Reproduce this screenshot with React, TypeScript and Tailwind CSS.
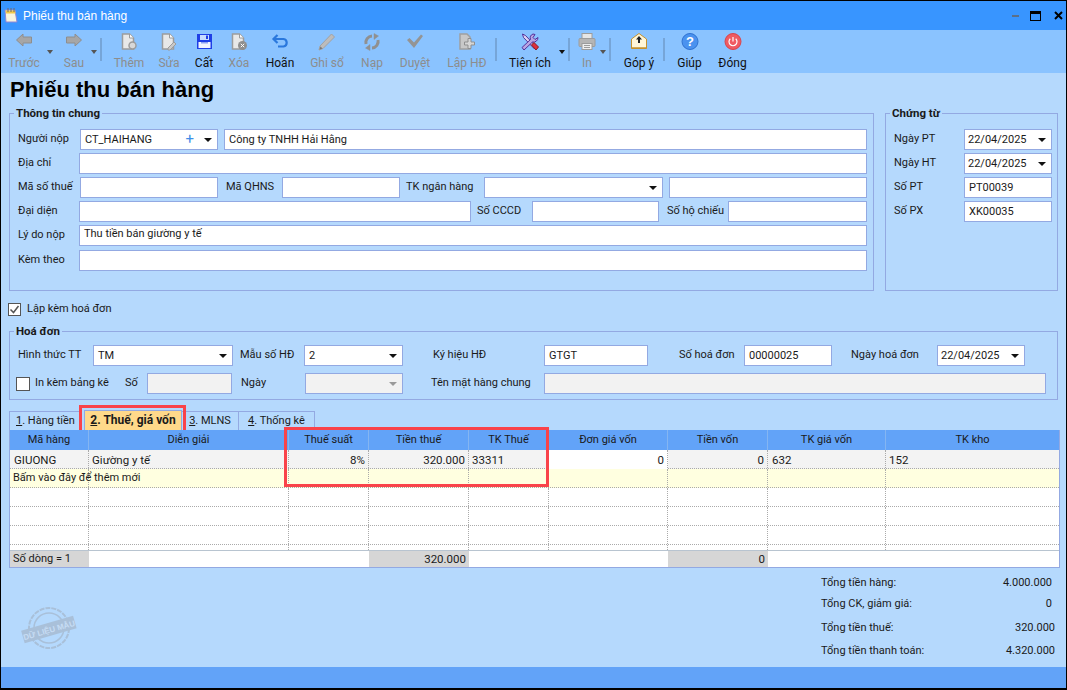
import type { ReactNode } from "react";

const fieldBorder = "border border-[#93a9e2]";
const gray = "#9c9c9c";

function ArrowLeft() {
  return (
    <svg width="18" height="16" viewBox="0 0 18 16">
      <path d="M1.500 7 8 1v3h8.500v6H8v3z" fill="#a6a6a6" stroke="#8e8e8e" />
    </svg>
  );
}

function ArrowRight() {
  return (
    <svg width="18" height="16" viewBox="0 0 18 16">
      <path d="M16.500 7 10 1v3H1.500v6H10v3z" fill="#a6a6a6" stroke="#8e8e8e" />
    </svg>
  );
}

function Doc({ children }: { children?: ReactNode }) {
  return (
    <svg width="18" height="18" viewBox="0 0 18 18">
      <path d="M2.500 1h7l4 4v11h-11z" fill="#e8e8e8" stroke={gray} strokeWidth="1.500" />
      <path d="M9.500 1v4h4" fill="#fff" stroke={gray} />
      {children}
    </svg>
  );
}

function Save() {
  return (
    <svg width="18" height="18" viewBox="0 0 18 18">
      <rect x="2" y="1" width="15" height="15" fill="#1f3fe6" />
      <rect x="5" y="2" width="9" height="5" fill="#c8dcff" />
      <rect x="3.500" y="9" width="12" height="6" fill="#f2f4ff" />
      <rect x="6" y="9" width="7" height="1.500" fill="#8fa3f2" />
      <rect x="11" y="2.500" width="2" height="3.500" fill="#1f3fe6" />
    </svg>
  );
}

function Undo() {
  return (
    <svg width="18" height="18" viewBox="0 0 18 18" fill="none" stroke="#2a78dd" strokeWidth="2.200">
      <path d="M6.500 2 2.500 6 6.500 10" />
      <path d="M3 6h9.500a3.800 3.800 0 0 1 0 7.500H7" />
    </svg>
  );
}

function Pencil() {
  return (
    <svg width="18" height="18" viewBox="0 0 18 18">
      <path d="M13.500 1 16.500 4 5 15.500 1 17 2 13z" fill="#bcbcbc" stroke="#a2a2a2" />
      <path d="M1.500 16.500 2.500 13.500 4.500 15.500z" fill="#777" />
    </svg>
  );
}

function Reload() {
  return (
    <svg width="18" height="18" viewBox="0 0 18 18" fill="none" stroke="#909090" strokeWidth="3">
      <path d="M3 11a6.500 6.500 0 0 1 6-8" />
      <path d="M15 7a6.500 6.500 0 0 1-6 8" />
      <path d="M11 0.500v6l4.500-3.500zM7 17.500v-6l-4.500 3.500z" fill="#909090" strokeWidth="0.500" />
    </svg>
  );
}

function Check() {
  return (
    <svg width="18" height="18" viewBox="0 0 18 18">
      <path d="M1 7 3.500 5 8 9.500 15 1.500 17 3 8 15z" fill="#949494" />
    </svg>
  );
}

function Invoice() {
  return (
    <svg width="18" height="18" viewBox="0 0 18 18">
      <path d="M2 1h7l3 3v12H2z" fill="#c8c8c8" stroke="#a0a0a0" strokeWidth="1.500" />
      <path d="M10 5.500h3v3.500h3.500v3H13v3.500h-3V12H6.500V9H10z" fill="#d6d6d6" stroke="#8f8f8f" />
    </svg>
  );
}

function Tools() {
  return (
    <svg width="20" height="18" viewBox="0 0 20 18">
      <path d="M2.500 1 5.500 2.500 16 13.500 14 15.500 3.500 4.500z" fill="#dcd2f2" stroke="#53309b" />
      <path d="M13 1a4.500 4.500 0 0 0-2.500 5.500L2 14.500 4 17l8.500-8a4.500 4.500 0 0 0 5.500-4.500l-3 2-2-2 2-3z" fill="#b9a5e2" stroke="#53309b" />
      <path d="M11.500 12 14 9.500 18.500 14 16 17z" fill="#e0303c" stroke="#8c1b24" />
    </svg>
  );
}

function Printer() {
  return (
    <svg width="18" height="18" viewBox="0 0 18 18">
      <rect x="4" y="0.500" width="10" height="5" fill="#e6e6e6" stroke={gray} />
      <rect x="1" y="5.500" width="16" height="8" rx="1" fill="#b5b5b5" stroke={gray} />
      <rect x="4" y="10.500" width="10" height="6" fill="#eeeeee" stroke={gray} />
      <path d="M6 12.500h6M6 14.500h6" stroke={gray} />
    </svg>
  );
}

function Mail() {
  return (
    <svg width="18" height="18" viewBox="0 0 18 18">
      <path d="M1.500 6 9 0.500 16.500 6v9.500h-15z" fill="#fff6d8" stroke="#c5922f" />
      <path d="M9 3 12 6.500H10V10H8V6.500H6z" fill="#222" />
      <path d="M1.500 15h15" stroke="#c5922f" strokeWidth="1.500" />
    </svg>
  );
}

function Help() {
  return (
    <svg width="18" height="18" viewBox="0 0 18 18">
      <circle cx="9" cy="8.500" r="8" fill="#4a92ef" stroke="#2f72d0" />
      <text x="9" y="13" textAnchor="middle" fontSize="13" fontWeight="700" fill="#fff" fontFamily="Liberation Sans, sans-serif">
        ?
      </text>
    </svg>
  );
}

function Power() {
  return (
    <svg width="18" height="18" viewBox="0 0 18 18">
      <circle cx="9" cy="8.500" r="8" fill="#ef5b62" stroke="#d9434a" />
      <path d="M6.300 5.800a4 4 0 1 0 5.400 0" fill="none" stroke="#fff" strokeWidth="1.200" />
      <path d="M9 4v4.500" stroke="#fff" strokeWidth="1.200" />
    </svg>
  );
}

function Tool({
  label,
  size,
  icon,
  off,
  caret,
}: {
  label: string;
  size: string;
  icon: ReactNode;
  off?: boolean;
  caret?: string;
}) {
  return (
    <div className={`relative flex flex-col items-center shrink-0 ${size}`}>
      <div className="h-[20px] flex items-start justify-center">{icon}</div>
      <span className={`mt-[2px] leading-[16px] ${off ? "text-[#8d8d8d]" : "text-[#111]"}`}>{label}</span>
      {caret && <span className={`absolute top-[17px] border-x-[3px] border-t-[4px] border-x-transparent ${caret}`} />}
    </div>
  );
}

function Sep({ className = "" }: { className?: string }) {
  return <div className={`w-[2px] h-[23px] mt-[5px] bg-[#76a5d8] shrink-0 ${className}`} />;
}

function Input({
  className,
  value,
  off,
  lead = "leading-[20px]",
}: {
  className: string;
  value?: string;
  off?: boolean;
  lead?: string;
}) {
  return (
    <div className={`h-[21px] pl-[4px] shrink-0 whitespace-nowrap ${lead} ${fieldBorder} ${off ? "bg-[#f2f2f2]" : "bg-white"} ${className}`}>
      {value}
    </div>
  );
}

function Select({
  className,
  value,
  off,
  plus,
  pad = "pl-[4px]",
}: {
  className: string;
  value?: string;
  off?: boolean;
  plus?: boolean;
  pad?: string;
}) {
  return (
    <div className={`h-[21px] pr-[5px] flex items-center justify-between shrink-0 ${pad} ${fieldBorder} ${off ? "bg-[#f2f2f2]" : "bg-white"} ${className}`}>
      <span className="leading-[17px] pb-[1px]">{value}</span>
      <span className="flex items-center gap-[10px]">
        {plus && <span className="text-[#3f8ee8] text-[15px] leading-[15px]">+</span>}
        <span className={`border-x-[4px] border-t-[4px] border-x-transparent ${off ? "border-t-[#9a9a9a]" : "border-t-[#111]"}`} />
      </span>
    </div>
  );
}

function Label({ className, children }: { className: string; children: ReactNode }) {
  return <span className={`shrink-0 whitespace-nowrap ${className}`}>{children}</span>;
}

function Row({ className = "", children }: { className?: string; children: ReactNode }) {
  return <div className={`flex items-center h-[21px] ${className}`}>{children}</div>;
}

const legend = "-ml-[4px] px-[2px] font-bold leading-[14px] text-[11.5px]";
const cols = "grid grid-cols-[79px_200px_80px_100px_80px_119px_100px_118px_1fr]";
const dotted = "border-r border-dotted border-[#aaaaaa]";

function EmptyRow({ className = "" }: { className?: string }) {
  return (
    <div className={`${cols} h-[19px] border-b border-dotted border-[#aaaaaa] ${className}`}>
      {Array.from({ length: 9 }).map((_, i) => (
        <div key={i} className={i < 8 ? dotted : ""} />
      ))}
    </div>
  );
}

function Total({ label, value, className = "" }: { label: string; value: string; className?: string }) {
  return (
    <div className={`flex justify-between h-[16px] leading-[16px] ${className}`}>
      <span>{label}</span>
      <span>{value}</span>
    </div>
  );
}

export default function App() {
  return (
    <div className="w-[1067px] h-[690px] overflow-hidden flex flex-col bg-[#b5d9fd] border-l border-r border-t border-b-2 border-black text-[11px] text-[#1a1a1a] font-['Roboto','Liberation_Sans',Arial,sans-serif]">
      {/* title bar */}
      <div className="h-[29px] shrink-0 bg-[#3895ff] flex items-center pl-[2px] pr-[3px]">
        <svg width="16" height="17" viewBox="0 0 16 17">
          <path d="M2 3h10l2 12H3z" fill="#f8f4de" stroke="#8e86d6" />
          <path d="M2.500 3.500h9.500l.5 3h-9.500z" fill="#f0c84a" />
          <path d="M5 1v4M8 1v4M11 1v4" stroke="#6b6b6b" />
        </svg>
        <span className="ml-[4px] text-white text-[12px] font-['Liberation_Sans',Arial,sans-serif]">Phiếu thu bán hàng</span>
        <div className="ml-auto flex items-center">
          <span className="w-[7px] h-[2px] bg-[#5b6f87]" />
          <span className="ml-[11px] w-[11px] h-[10px] border border-t-[3px] border-black" />
          <svg className="ml-[13px]" width="9" height="9" viewBox="0 0 9 9">
            <path d="M1 1l7 7M8 1 1 8" stroke="#000" strokeWidth="2" />
          </svg>
        </div>
      </div>

      {/* toolbar */}
      <div className="h-[43px] shrink-0 bg-[#8ac3ff] flex items-start pt-[3px] text-[12px]">
        <Tool size="ml-[3px] w-[40px]" label="Trước" icon={<ArrowLeft />} off />
        <span className="w-0 h-0 ml-[3px] mt-[17px] border-x-[3px] border-t-[4px] border-x-transparent border-t-[#555]" />
        <Tool size="ml-[1px] w-[40px]" label="Sau" icon={<ArrowRight />} off />
        <span className="w-0 h-0 -ml-[3px] mt-[17px] border-x-[3px] border-t-[4px] border-x-transparent border-t-[#555]" />
        <Sep className="ml-[3px]" />
        <Tool size="ml-[8px] w-[38px]" label="Thêm" off icon={<Doc><circle cx="12.500" cy="12.500" r="3.500" fill="#d8d8d8" stroke={gray} strokeWidth="1.500" /></Doc>} />
        <Tool size="ml-[2px] w-[38px]" label="Sửa" off icon={<Doc><path d="M8 15l6-6 2 2-6 6H8z" fill="#c9c9c9" stroke={gray} /></Doc>} />
        <Tool size="w-[32px]" label="Cất" icon={<Save />} />
        <Tool size="w-[38px]" label="Xóa" off icon={<Doc><circle cx="12.500" cy="12.500" r="4.500" fill="#8f8f8f" /><path d="M10.800 10.800l3.400 3.400M14.200 10.800l-3.400 3.400" stroke="#fff" /></Doc>} />
        <Tool size="w-[44px]" label="Hoãn" icon={<Undo />} />
        <Tool size="w-[50px]" label="Ghi sổ" off icon={<Pencil />} />
        <Tool size="w-[40px]" label="Nạp" off icon={<Reload />} />
        <Tool size="w-[46px]" label="Duyệt" off icon={<Check />} />
        <Tool size="ml-[1px] w-[56px]" label="Lập HĐ" off icon={<Invoice />} />
        <Sep />
        <Tool size="w-[66px]" label="Tiện ích" icon={<Tools />} caret="left-[62px] border-t-[#111]" />
        <Sep className="ml-[5px]" />
        <Tool size="w-[34px]" label="In" off icon={<Printer />} caret="left-[30px] border-t-[#555]" />
        <Sep className="ml-[5px]" />
        <Tool size="ml-[4px] w-[48px]" label="Góp ý" icon={<Mail />} />
        <Sep />
        <Tool size="w-[49px]" label="Giúp" icon={<Help />} />
        <Tool size="w-[37px]" label="Đóng" icon={<Power />} />
      </div>

      {/* body */}
      <div className="flex-1 min-h-0 flex flex-col pl-[8px] pr-[8px]">
        <h1 className="mt-[4px] ml-[1px] h-[26px] text-[22px] leading-[26px] font-bold text-black font-['Liberation_Sans',Arial,sans-serif]">Phiếu thu bán hàng</h1>

        <div className="mt-[3px] flex">
          <fieldset className={`w-[865px] h-[185px] ${fieldBorder} pl-[8px]`}>
            <legend className={legend}>Thông tin chung</legend>
            <div className="flex flex-col gap-[3px] mt-[9px]">
              <Row>
                <Label className="w-[62px]">Người nộp</Label>
                <Select className="w-[138px]" value="CT_HAIHANG" plus />
                <Input className="ml-[6px] w-[643px]" value="Công ty TNHH Hải Hằng" />
              </Row>
              <Row>
                <Label className="w-[61px]">Địa chỉ</Label>
                <Input className="w-[788px]" />
              </Row>
              <Row>
                <Label className="w-[62px]">Mã số thuế</Label>
                <Input className="w-[138px]" />
                <Label className="ml-[8px] w-[56px]">Mã QHNS</Label>
                <Input className="w-[118px]" />
                <Label className="ml-[6px] w-[78px]">TK ngân hàng</Label>
                <Select className="w-[179px]" />
                <Input className="ml-[6px] w-[198px]" />
              </Row>
              <Row>
                <Label className="w-[61px]">Đại diện</Label>
                <Input className="w-[392px]" />
                <Label className="ml-[6px] w-[55px]">Số CCCD</Label>
                <Input className="w-[127px]" />
                <Label className="ml-[8px] w-[61px]">Số hộ chiếu</Label>
                <Input className="w-[139px]" />
              </Row>
              <Row>
                <Label className="w-[61px]">Lý do nộp</Label>
                <Input className="w-[788px]" lead="leading-[15px]" value="Thu tiền bán giường y tế" />
              </Row>
              <Row className="mt-[1px]">
                <Label className="w-[61px]">Kèm theo</Label>
                <Input className="w-[788px]" />
              </Row>
            </div>
          </fieldset>

          <fieldset className={`ml-[11px] w-[173px] h-[185px] ${fieldBorder} pl-[8px]`}>
            <legend className={legend}>Chứng từ</legend>
            <div className="flex flex-col gap-[3px] mt-[9px]">
              <Row>
                <Label className="w-[70px]">Ngày PT</Label>
                <Select className="w-[88px]" pad="pl-[3px]" value="22/04/2025" />
              </Row>
              <Row>
                <Label className="w-[70px]">Ngày HT</Label>
                <Select className="w-[88px]" pad="pl-[3px]" value="22/04/2025" />
              </Row>
              <Row>
                <Label className="w-[70px]">Số PT</Label>
                <Input className="w-[88px]" value="PT00039" />
              </Row>
              <Row>
                <Label className="w-[70px]">Số PX</Label>
                <Input className="w-[88px]" value="XK00035" />
              </Row>
            </div>
          </fieldset>
        </div>

        <div className="mt-[11px] -ml-[1px] h-[14px] flex items-center">
          <span className="w-[13px] h-[13px] bg-white border border-[#555] flex items-center justify-center">
            <svg width="11" height="11" viewBox="0 0 11 11">
              <path d="M1.500 5.500 4.500 8.500 9.500 2" fill="none" stroke="#555" strokeWidth="1.500" />
            </svg>
          </span>
          <span className="ml-[6px]">Lập kèm hoá đơn</span>
        </div>

        <fieldset className={`mt-[8px] w-[1049px] h-[76px] ${fieldBorder} pl-[8px]`}>
          <legend className={legend}>Hoá đơn</legend>
          <div className="flex flex-col gap-[7px] mt-[7px]">
            <Row>
              <Label className="w-[75px]">Hình thức TT</Label>
              <Select className="w-[140px]" value="TM" />
              <Label className="ml-[7px] w-[64px]">Mẫu số HĐ</Label>
              <Select className="w-[99px]" value="2" />
              <Label className="ml-[30px] w-[111px]">Ký hiệu HĐ</Label>
              <Input className="w-[104px]" value="GTGT" />
              <Label className="ml-[31px] w-[65px]">Số hoá đơn</Label>
              <Input className="w-[88px]" value="00000025" />
              <Label className="ml-[19px] w-[86px]">Ngày hoá đơn</Label>
              <Select className="w-[88px]" pad="pl-[3px]" value="22/04/2025" />
            </Row>
            <Row>
              <span className="-ml-[2px] w-[14px] h-[14px] bg-white border border-[#555] shrink-0" />
              <Label className="ml-[5px] w-[90px]">In kèm bảng kê</Label>
              <Label className="w-[22px]">Số</Label>
              <Input className="w-[85px]" off />
              <Label className="ml-[9px] w-[64px]">Ngày</Label>
              <Select className="w-[98px]" off />
              <Label className="ml-[28px] w-[113px]">Tên mặt hàng chung</Label>
              <Input className="w-[502px]" off />
            </Row>
          </div>
        </fieldset>

        {/* tabs */}
        <div className="relative mt-[10px] h-[20px] flex items-end whitespace-nowrap">
          <div className="h-[19px] w-[71px] pl-[6px] leading-[18px] border border-[#93a9e2] border-b-0"><u>1</u>. Hàng tiền</div>
          <div className="ml-[4px] h-[20px] w-[98px] text-center text-[12px] font-bold leading-[19px] bg-[#ffd98a] border border-[#93a9e2] border-b-0"><u>2</u>. Thuế, giá vốn</div>
          <div className="h-[19px] w-[57px] text-center leading-[18px] border-t border-r border-[#93a9e2]"><u>3</u>. MLNS</div>
          <div className="h-[19px] w-[76px] text-center leading-[18px] border-t border-r border-[#93a9e2]"><u>4</u>. Thống kê</div>
          <div className="absolute left-[70px] -top-[5px] w-[107px] h-[30px] border-[3px] border-[#f9434a]" />
        </div>

        {/* grid */}
        <div className="relative w-[1051px] h-[138px] border border-t-0 border-[#93a9e2] bg-white flex flex-col">
          <div className={`${cols} h-[20px] shrink-0 bg-[#62a3f8] text-center leading-[20px]`}>
            {["Mã hàng", "Diễn giải", "Thuế suất", "Tiền thuế", "TK Thuế", "Đơn giá vốn", "Tiền vốn", "TK giá vốn", "TK kho"].map((h, i) => (
              <div key={h} className={i < 8 ? "border-r border-[#84b5f2]" : ""}>{h}</div>
            ))}
          </div>
          <div className={`${cols} h-[19px] shrink-0 bg-[#f3f3f3] text-[11.5px] leading-[20px] border-b border-dotted border-[#aaaaaa]`}>
            <div className={`${dotted} pl-[4px]`}>GIUONG</div>
            <div className={`${dotted} pl-[3px]`}>Giường y tế</div>
            <div className={`${dotted} pr-[3px] text-right`}>8%</div>
            <div className={`${dotted} pr-[3px] text-right`}>320.000</div>
            <div className={`${dotted} pl-[3px]`}>33311</div>
            <div className={`${dotted} pr-[3px] text-right bg-white`}>0</div>
            <div className={`${dotted} pr-[3px] text-right`}>0</div>
            <div className={`${dotted} pl-[4px]`}>632</div>
            <div className="pl-[3px]">152</div>
          </div>
          <div className="relative h-[19px] shrink-0 bg-[#ffffe0]">
            <EmptyRow />
            <span className="absolute left-[3px] top-0 leading-[18px]">Bấm vào đây để thêm mới</span>
          </div>
          <EmptyRow />
          <EmptyRow />
          <EmptyRow />
          <div className="flex-1 min-h-0 overflow-hidden">
            <EmptyRow className="border-b-0" />
          </div>
          <div className={`${cols} h-[17px] shrink-0 border-t border-[#b8c4d0] leading-[16px]`}>
            <div className="bg-[#d6d6d6] pl-[3px]">Số dòng = 1</div>
            <div className="col-span-2" />
            <div className="bg-[#d6d6d6] text-right text-[11.5px] pr-[3px]">320.000</div>
            <div className="col-span-2" />
            <div className="bg-[#d6d6d6] text-right text-[11.5px] pr-[3px]">0</div>
            <div className="col-span-2" />
          </div>
          <div className="absolute left-[274px] -top-[3px] w-[265px] h-[60px] border-[3px] border-[#f9434a]" />
        </div>

        {/* totals */}
        <div className="flex-1 min-h-0 flex justify-between">
          <svg className="ml-[12px] mt-[38px]" width="58" height="46" viewBox="0 0 58 46">
            <g fill="none" stroke="#a9c0d9">
              <circle cx="28" cy="22" r="20" strokeWidth="2" strokeDasharray="5 1" />
              <circle cx="28" cy="22" r="15" strokeWidth="1.500" />
            </g>
            <g transform="rotate(-16 28 24)">
              <rect x="1" y="17" width="54" height="13" fill="#a9c0d9" />
              <text x="28" y="27" textAnchor="middle" fontSize="8" fontWeight="700" fill="#c6dcf4" fontFamily="Liberation Sans, sans-serif">
                DỮ LIỆU MẪU
              </text>
            </g>
          </svg>
          <div className="w-[234px] mr-[3px] mt-[7px] flex flex-col">
            <Total label="Tổng tiền hàng:" value="4.000.000" className="pr-[3px]" />
            <Total label="Tổng CK, giảm giá:" value="0" className="mt-[5px] pr-[3px]" />
            <Total label="Tổng tiền thuế:" value="320.000" className="mt-[8px]" />
            <Total label="Tổng tiền thanh toán:" value="4.320.000" className="mt-[7px]" />
          </div>
        </div>
      </div>

      {/* status bar */}
      <div className="h-[21px] shrink-0 bg-[#62a3f8]" />
    </div>
  );
}
